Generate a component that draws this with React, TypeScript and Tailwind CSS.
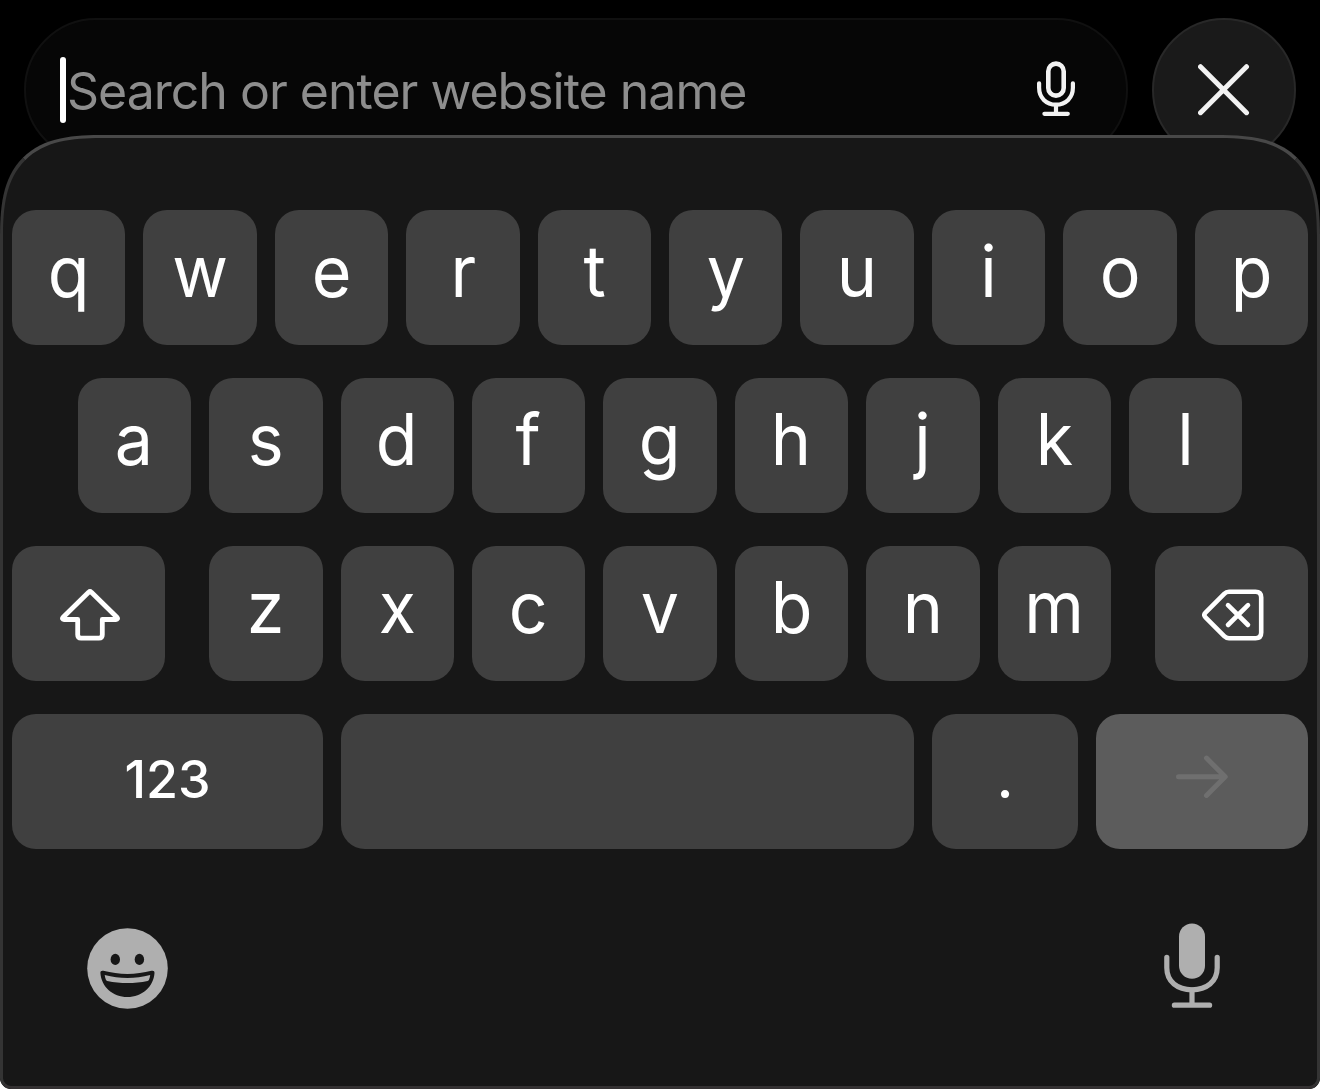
import type { ReactNode } from "react";

const topRow = ["q", "w", "e", "r", "t", "y", "u", "i", "o", "p"];
const middleRow = ["a", "s", "d", "f", "g", "h", "j", "k", "l"];
const bottomRow = ["z", "x", "c", "v", "b", "n", "m"];

function LetterKey({ letter }: { letter: string }) {
  return (
    <button className="flex h-[135px] min-w-0 flex-1 justify-center rounded-3xl bg-[#404040] pt-[10px] text-white">
      <span className="scale-x-[0.96] text-[71px] leading-[103px]">{letter}</span>
    </button>
  );
}

function Key({
  label,
  className,
  children,
}: {
  label: string;
  className: string;
  children?: ReactNode;
}) {
  return (
    <button
      aria-label={label}
      className={`flex h-[135px] shrink-0 justify-center rounded-3xl ${className}`}
    >
      {children}
    </button>
  );
}

function MicIcon() {
  return (
    <svg
      className="mb-0.5 h-[56px] w-[40px]"
      viewBox="0 0 40 56"
      fill="none"
      stroke="#f2f2f2"
      strokeWidth="4.2"
      strokeLinecap="round"
    >
      <rect x="12.3" y="2.6" width="15.4" height="32" rx="7.7" strokeWidth="4.6" />
      <path d="M3.1 22.3v4.5c0 9.8 7 16.9 16.9 16.9s16.9-7.1 16.9-16.9v-4.5" />
      <path d="M20 44v7.5M8.4 52.8h23.4" />
    </svg>
  );
}

function CloseIcon() {
  return (
    <svg
      className="h-[52px] w-[52px]"
      viewBox="0 0 52 52"
      fill="none"
      stroke="#f2f2f2"
      strokeWidth="5"
      strokeLinecap="round"
    >
      <path d="M2.5 2.7l46 46M48.5 2.7l-46 46" />
    </svg>
  );
}

function ShiftIcon() {
  return (
    <svg
      className="h-[52px] w-[60px]"
      viewBox="0 0 60 52"
      fill="none"
      stroke="#fff"
      strokeWidth="4.8"
      strokeLinejoin="round"
    >
      <path d="M28.6 3.2 3.1 28.2c-1.2 1.2-.6 2.3.9 2.3h13.7v15.3q0 3.4 3.4 3.4h17.8q3.4 0 3.4-3.4V30.5H56c1.5 0 2.1-1.1.9-2.3L31.4 3.2q-1.4-1.2-2.8 0Z" />
    </svg>
  );
}

function BackspaceIcon() {
  return (
    <svg
      className="h-[52px] w-[62px]"
      viewBox="0 0 62 52"
      fill="none"
      stroke="#fff"
      strokeWidth="4.6"
      strokeLinecap="round"
      strokeLinejoin="round"
    >
      <path d="M27 2.8h26.5q5.7 0 5.7 5.7v35q0 5.7-5.7 5.7H27q-2.8 0-4.8-2L3.5 28.3q-2.3-2.3 0-4.6L22.2 4.8q2-2 4.8-2Z" />
      <path d="M26 16.2 46 36M46 16.2 26 36" />
    </svg>
  );
}

function ArrowIcon() {
  return (
    <svg
      className="h-[43px] w-[52px]"
      viewBox="0 0 52 43"
      fill="none"
      stroke="#6f6f6f"
      strokeWidth="5"
      strokeLinecap="round"
      strokeLinejoin="round"
    >
      <path d="M2.5 21.8h46.5M30.5 3.1 49.2 21.8 30.5 40.5" />
    </svg>
  );
}

function EmojiIcon() {
  return (
    <svg className="h-[81px] w-[81px]" viewBox="0 0 81 81">
      <circle cx="40.5" cy="40.5" r="40.3" fill="#afafaf" />
      <g fill="#171717">
        <ellipse cx="28.3" cy="31.4" rx="4.7" ry="5.6" />
        <ellipse cx="52.4" cy="31.4" rx="4.7" ry="5.6" />
        <path d="M13.4 44.9c-.1-1.9 1.2-2.6 3-2.1 15.4 4.1 32.7 4.1 48.1 0 1.8-.5 3.1.2 3 2.1-.9 13.8-12.6 24-27.1 24S14.3 58.7 13.4 44.9Z" />
      </g>
      <path
        fill="#afafaf"
        d="M17.7 47.1c15 3.8 30.5 3.8 45.5 0-.2 1.7-.6 3.200-1.200 4.600q-.3.9-1.400 1.200c-13.300 2.700-27 2.700-40.300 0q-1.100-.3-1.400-1.200c-.6-1.400-1-2.900-1.200-4.600Z"
      />
    </svg>
  );
}

function DictationIcon() {
  return (
    <svg
      className="h-[85px] w-[56px]"
      viewBox="0 0 56 85"
      fill="none"
      stroke="#afafaf"
      strokeWidth="5.2"
      strokeLinecap="round"
    >
      <rect x="15" y="0.5" width="26" height="55.3" rx="13" fill="#afafaf" stroke="none" />
      <path d="M2.8 34.3v10.500C2.800 58.800 13.500 66.800 28 66.800s25.200-8 25.200-22V34.300" />
      <path d="M28 67v13M10.400 82.200h35.200" />
    </svg>
  );
}

export default function App() {
  return (
    <div className="h-[1089px] w-[1320px] overflow-hidden rounded-b-[11px] bg-black font-['Inter','Liberation_Sans',sans-serif]">
      <header className="flex h-[162px] gap-6 px-6 pt-[18px]">
        <div className="flex h-36 flex-1 items-center rounded-full border-2 border-[#101010] bg-[#060606] pr-[50px] pl-[34px]">
          <span className="h-[66px] w-1.5 shrink-0 rounded-full bg-white" />
          <span className="flex-1 pt-[3px] pl-px text-[50px] tracking-[-1px] whitespace-nowrap text-[#8d8d8d]">
            Search or enter website name
          </span>
          <MicIcon />
        </div>
        <button
          aria-label="Close"
          className="flex size-36 shrink-0 items-center justify-center rounded-full border-2 border-[#282828] bg-[#1a1a1a]"
        >
          <CloseIcon />
        </button>
      </header>

      <main className="relative -mt-[27px] flex h-[954px] flex-col rounded-t-[80px] rounded-b-[11px] border-3 border-x-[#343434] border-t-[#484848] border-b-[#343132] bg-[#171717] px-[9px] pt-[72px] supports-[corner-shape:squircle]:rounded-t-[105px] supports-[corner-shape:squircle]:[corner-top-left-shape:superellipse(1.5)] supports-[corner-shape:squircle]:[corner-top-right-shape:superellipse(1.5)]">
        <div className="flex flex-col gap-[33px]">
          <div className="flex gap-[18px]">
            {topRow.map((letter) => (
              <LetterKey key={letter} letter={letter} />
            ))}
          </div>

          <div className="flex gap-[18px] px-[65.7px]">
            {middleRow.map((letter) => (
              <LetterKey key={letter} letter={letter} />
            ))}
          </div>

          <div className="flex gap-[44.1px]">
            <Key label="Shift" className="w-[153px] bg-[#404040] pt-[43px] pl-[2px]">
              <ShiftIcon />
            </Key>
            <div className="flex flex-1 gap-[18px]">
              {bottomRow.map((letter) => (
                <LetterKey key={letter} letter={letter} />
              ))}
            </div>
            <Key label="Delete" className="w-[153px] bg-[#404040] pt-[43px] pl-[3px]">
              <BackspaceIcon />
            </Key>
          </div>

          <div className="flex gap-[18px]">
            <Key
              label="Numbers"
              className="w-[311px] bg-[#404040] pt-[30px] text-[52px] leading-[72px] font-medium text-white"
            >
              123
            </Key>
            <Key label="Space" className="w-[573px] bg-[#404040]" />
            <Key
              label="Period"
              className="w-[146px] bg-[#404040] pt-[30px] text-[52px] leading-[72px] font-semibold text-white"
            >
              .
            </Key>
            <Key label="Go" className="w-[212px] bg-[#5c5c5c] pt-[41px]">
              <ArrowIcon />
            </Key>
          </div>
        </div>

        <div className="flex items-start justify-between pt-[74px] pr-[88px] pl-[75px]">
          <button aria-label="Emoji" className="pt-[5px]">
            <EmojiIcon />
          </button>
          <button aria-label="Dictation">
            <DictationIcon />
          </button>
        </div>
      </main>
    </div>
  );
}
